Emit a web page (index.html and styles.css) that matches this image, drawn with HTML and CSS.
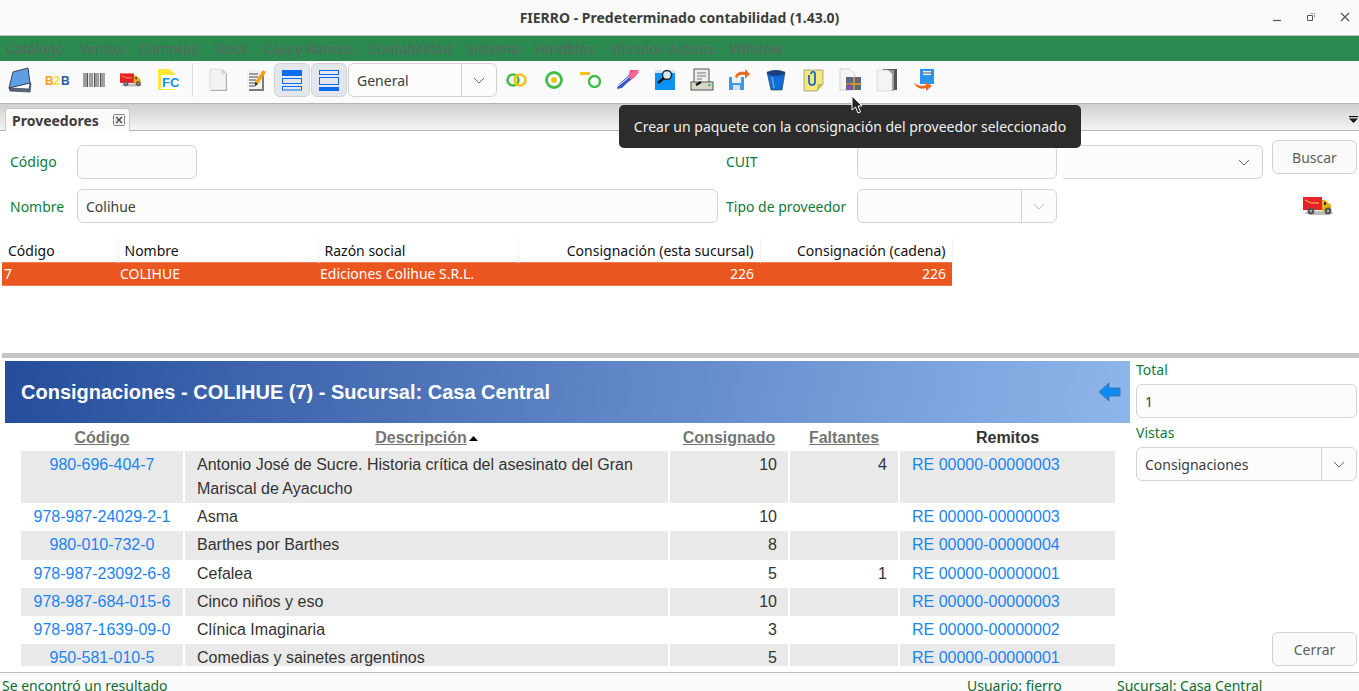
FILE: index.html
```html
<!DOCTYPE html>
<html lang="es">
<head>
<meta charset="utf-8">
<title>FIERRO</title>
<link rel="stylesheet" href="styles.css">
</head>
<body>
<svg class="defs" width="0" height="0">
  <defs>
    <symbol id="truck" viewBox="0 0 30 18">
      <ellipse cx="16" cy="16" rx="14" ry="2" fill="#bbb"/>
      <rect x="0" y="0" width="19" height="13" fill="#e8202a"/>
      <path d="M2 3l6 3h8" stroke="#ffd23c" fill="none"/>
      <path d="M19 3h3l6 5v6H19z" fill="#e0b020"/>
      <rect x="21" y="5" width="2" height="3" fill="#333"/>
      <circle cx="8" cy="14" r="3.4" fill="#555"/><circle cx="8" cy="14" r="1.3" fill="#aaa"/>
      <circle cx="25" cy="14" r="3.4" fill="#555"/><circle cx="25" cy="14" r="1.3" fill="#aaa"/>
    </symbol>
    <symbol id="chev" viewBox="0 0 12 7">
      <path d="M1 1l5 5 5-5" fill="none" stroke="currentColor" stroke-width="1"/>
    </symbol>
  </defs>
</svg>

<header class="titlebar">
  <span class="title">FIERRO - Predeterminado contabilidad (1.43.0)</span>
  <div class="winctl">
    <svg width="10" height="10" viewBox="0 0 10 10"><path d="M1 8.5h8" stroke="#555" stroke-width="1.2"/></svg>
    <svg width="10" height="10" viewBox="0 0 10 10"><path d="M1.5 3.5h5v5h-5z" fill="none" stroke="#555"/><path d="M4 1.5h4.5V6" fill="none" stroke="#999" stroke-width=".8"/></svg>
    <svg width="10" height="10" viewBox="0 0 10 10"><path d="M1 1l8 8M9 1l-8 8" stroke="#555" stroke-width="1.2"/></svg>
  </div>
</header>

<nav class="menubar">
  <span>Catálogo</span><span>Ventas</span><span>Compras</span><span>Stock</span><span>Caja y Bancos</span><span>Contabilidad</span><span>Sistema</span><span>Vendidos</span><span>Vínculos Activos</span><span>Window</span>
</nav>

<div class="toolbar">
  <div class="ti"><svg width="26" height="26" viewBox="0 0 26 26"><path d="M2 21L6 5 21 1l2 15z" fill="#5f9ee0" stroke="#33415a"/><path d="M2 21l1 3 20 1 1-9-1 0-1 6-19-1z" fill="#5a6478" stroke="#33415a" stroke-width=".7"/></svg></div>
  <div class="ti"><svg width="26" height="16" viewBox="0 0 26 16"><text class="b2b" x="1" y="13" fill="#ff9d1e">B</text><text class="b2b" x="9.5" y="13" fill="#f7e034">2</text><text class="b2b" x="17" y="13" fill="#1d5ea8">B</text></svg></div>
  <div class="ti"><svg width="24" height="16" viewBox="0 0 24 16"><rect x="1" y="1" width="22" height="14" fill="#e8e8e8"/><path d="M2 1v14M4 1v14M5.5 1v14M8 1v14M10 1v14M12.5 1v14M14 1v14M16 1v14M18.5 1v14M20 1v14M22 1v14" stroke="#555" stroke-width="1"/></svg></div>
  <div class="ti"><svg width="22" height="14"><use href="#truck"/></svg></div>
  <div class="ti"><svg width="22" height="24" viewBox="0 0 22 24"><path d="M1 1h12l5 5v16H1z" fill="#ffe63c"/><rect x="4" y="7" width="18" height="14" fill="#fff"/><text class="fc" x="5" y="19">FC</text></svg></div>
  <div class="tsep"></div>
  <div class="ti"><svg width="20" height="24" viewBox="0 0 20 24"><path d="M2 1h11l5 5v17H2z" fill="#555" opacity=".55"/><path d="M1 1h11l5 5v16H1z" fill="#f3f3f3" stroke="#ccc" stroke-width=".6"/><path d="M12 1v5h5z" fill="#ddd"/></svg></div>
  <div class="ti"><svg width="20" height="24" viewBox="0 0 20 24"><path d="M3 3h15v20H3z" fill="#444" opacity=".7"/><path d="M1 2h15v19H1z" fill="#f2f2f2"/><path d="M3 6h9M3 9h9M3 12h7M3 15h6M3 18h6" stroke="#444"/><path d="M17 2l3 2-8 12-3 2 0-4z" fill="#f2a21e"/><path d="M9 18l0-4 3 2z" fill="#222"/></svg></div>
  <button class="tog"><svg width="22" height="22" viewBox="0 0 22 22"><rect x="1" y="1" width="20" height="6" fill="#0a6cf0"/><rect x="1.5" y="9.5" width="19" height="5" fill="none" stroke="#0a6cf0"/><rect x="1.5" y="17.5" width="19" height="3.5" fill="none" stroke="#0a6cf0"/></svg></button>
  <button class="tog"><svg width="22" height="22" viewBox="0 0 22 22"><rect x="1.5" y="1.5" width="19" height="4" fill="none" stroke="#0a6cf0"/><rect x="1.5" y="8.5" width="19" height="7" fill="none" stroke="#0a6cf0"/><rect x="1" y="18" width="20" height="4" fill="#0a6cf0"/></svg></button>
  <div class="combo tcombo"><span class="cval">General</span><span class="carrow"><svg width="12" height="7"><use href="#chev"/></svg></span></div>
  <div class="ti"><svg width="24" height="16" viewBox="0 0 24 16"><circle cx="8" cy="8" r="5.5" fill="none" stroke="#3fbe48" stroke-width="2.6"/><circle cx="15" cy="8" r="5.5" fill="none" stroke="#f4c21a" stroke-width="2.6"/></svg></div>
  <div class="ti"><svg width="20" height="20" viewBox="0 0 20 20"><circle cx="10" cy="10" r="7.5" fill="#fff" stroke="#3fbe48" stroke-width="2.8"/><circle cx="10" cy="10" r="3" fill="#f4c21a"/></svg></div>
  <div class="ti"><svg width="24" height="18" viewBox="0 0 24 18"><rect x="1" y="1" width="10" height="3" fill="#f4c21a"/><circle cx="15.500" cy="10.500" r="5.500" fill="#fff" stroke="#3fbe48" stroke-width="2.400"/></svg></div>
  <div class="ti"><svg width="24" height="22" viewBox="0 0 24 22"><path d="M14 1l9 0-4 7-8 6z" fill="#f0508a"/><path d="M12 6l9-5 2 3-10 7z" fill="#f56a9a"/><path d="M2 16l10-9 3 3-9 9-5 1z" fill="#3a55d0"/><path d="M2 17l11-9" stroke="#fff"/></svg></div>
  <div class="ti"><svg width="22" height="22" viewBox="0 0 22 22"><rect x="1" y="1" width="20" height="20" fill="#0a93f5"/><rect x="1" y="1" width="20" height="3" fill="#cfe8fb"/><circle cx="13" cy="6" r="4.500" fill="#cfe8fb" stroke="#222" stroke-width="1.400"/><path d="M10 9l-6 5" stroke="#111" stroke-width="2.400"/></svg></div>
  <div class="ti"><svg width="24" height="24" viewBox="0 0 24 24"><path d="M4 1h15v14H4z" fill="#eee" stroke="#555"/><path d="M7 5h9M7 8h9M7 11h5" stroke="#777"/><rect x="1" y="14" width="22" height="8" fill="#d8d8c8" stroke="#555"/><rect x="18" y="16" width="3" height="2" fill="#45d060"/><path d="M6 17l5-3" stroke="#111" stroke-width="2.400"/></svg></div>
  <div class="ti"><svg width="24" height="22" viewBox="0 0 24 22"><path d="M2 8h15v13H2z" fill="#3f98e0"/><rect x="5" y="8" width="9" height="6" fill="#eee"/><rect x="6" y="16" width="7" height="5" fill="#dde"/><path d="M8 8c1-5 6-6 10-5V0l5 5-5 5V6c-4-1-7 0-8 3z" fill="#e56a28"/></svg></div>
  <div class="ti"><svg width="20" height="22" viewBox="0 0 20 22"><path d="M1 3h18l-3 18H5z" fill="#0f6fd6" stroke="#234" stroke-width=".6"/><ellipse cx="10" cy="4" rx="9" ry="3" fill="#1a3f80"/><path d="M6 8l2 11" stroke="#4ea5f0" stroke-width="1.500"/></svg></div>
  <div class="ti"><svg width="22" height="24" viewBox="0 0 22 24"><path d="M2 2h19v14l-6 7H2z" fill="#f6e878" stroke="#888" stroke-width=".7"/><path d="M15 23l1-7h5z" fill="#c9b84a"/><path d="M9 6c0-3 4-3 4 0v8c0 4-6 4-6 0V7" fill="none" stroke="#1060d0" stroke-width="1.700"/></svg></div>
  <div class="ti"><svg width="24" height="24" viewBox="0 0 24 24"><path d="M2 1h10l5 5v16H2z" fill="#f4f4f4" stroke="#bbb" stroke-width=".6"/><rect x="8" y="9" width="15" height="13" fill="#56688a"/><path d="M8 16h15" stroke="#f29a1c" stroke-width="1.500"/><path d="M16 9v13" stroke="#f29a1c" stroke-width="1.500"/><rect x="9" y="16" width="3" height="6" fill="#a040c0"/></svg></div>
  <div class="ti"><svg width="24" height="24" viewBox="0 0 24 24"><path d="M8 1h14v21H8z" fill="#555"/><path d="M5 2h14v21H5z" fill="#999"/><path d="M2 2h11l4 4v17H2z" fill="#f4f4f4" stroke="#ccc" stroke-width=".6"/></svg></div>
  <div class="ti"><svg width="24" height="24" viewBox="0 0 24 24"><path d="M8 1h14v15H8z" fill="#2a94ee"/><rect x="11" y="3" width="8" height="4" fill="#eee"/><path d="M11 5h8" stroke="#555"/><path d="M2 15c3 2 7 4 12 2v-3l6 4-6 5v-3c-6 2-10-1-12-5z" fill="#e56a28"/></svg></div>
</div>

<div class="tabbar">
  <div class="tab"><span>Proveedores</span><svg width="12" height="12" viewBox="0 0 12 12"><rect x=".5" y=".5" width="11" height="11" rx="1" fill="#eee" stroke="#888"/><path d="M3 3l6 6M9 3l-6 6" stroke="#444" stroke-width="1.300"/></svg></div>
  <svg class="tabmenu" width="9" height="7" viewBox="0 0 9 7"><path d="M0 0h9v1.200H0z" fill="#111"/><path d="M0 2.500h9L4.500 7z" fill="#111"/></svg>
</div>

<main class="content">
  <section class="upper">
    <form class="search">
      <label class="flabel">Código</label>
      <input class="inp inp-short" type="text">
      <label class="flabel">CUIT</label>
      <input class="inp" type="text">
      <div class="combo plain"><svg width="12" height="7"><use href="#chev"/></svg></div>
      <button class="btn btn-top" type="button">Buscar</button>

      <label class="flabel">Nombre</label>
      <input class="inp" type="text" value="Colihue">
      <label class="flabel">Tipo de proveedor</label>
      <div class="combo"><span class="cval"></span><span class="carrow carrow-dim"><svg width="12" height="7"><use href="#chev"/></svg></span></div>
      <div class="spacer"></div>
      <svg class="ftruck" width="30" height="18"><use href="#truck"/></svg>
    </form>

    <table class="results">
      <thead>
        <tr><th class="c1">Código</th><th class="c2">Nombre</th><th class="c3">Razón social</th><th class="c4 num">Consignación (esta sucursal)</th><th class="c5 num">Consignación (cadena)</th></tr>
      </thead>
      <tbody>
        <tr><td>7</td><td>COLIHUE</td><td>Ediciones Colihue S.R.L.</td><td class="num">226</td><td class="num">226</td></tr>
      </tbody>
    </table>
  </section>

  <div class="splitter"></div>

  <section class="lower">
    <div class="report">
      <div class="banner">
        <h1>Consignaciones - COLIHUE (7) - Sucursal: Casa Central</h1>
        <svg width="24" height="20" viewBox="0 0 24 20"><path d="M1 10l10-9v5h11v8H11v5z" fill="#0a8cf0" stroke="#4a6a9a" stroke-width=".8"/></svg>
      </div>
      <div class="gridwrap">
        <table class="grid">
          <thead>
            <tr>
              <th class="g1"><a>Código</a></th>
              <th class="g2"><a>Descripción</a><svg class="sort" width="9" height="5" viewBox="0 0 9 5"><path d="M0 5l4.500-5L9 5z" fill="#000"/></svg></th>
              <th class="g3"><a>Consignado</a></th>
              <th class="g4"><a>Faltantes</a></th>
              <th class="g5">Remitos</th>
            </tr>
          </thead>
          <tbody>
            <tr><td class="code">980-696-404-7</td><td>Antonio José de Sucre. Historia crítica del asesinato del Gran Mariscal de Ayacucho</td><td class="n">10</td><td class="n">4</td><td class="rem">RE 00000-00000003</td></tr>
            <tr><td class="code">978-987-24029-2-1</td><td>Asma</td><td class="n">10</td><td class="n"></td><td class="rem">RE 00000-00000003</td></tr>
            <tr><td class="code">980-010-732-0</td><td>Barthes por Barthes</td><td class="n">8</td><td class="n"></td><td class="rem">RE 00000-00000004</td></tr>
            <tr><td class="code">978-987-23092-6-8</td><td>Cefalea</td><td class="n">5</td><td class="n">1</td><td class="rem">RE 00000-00000001</td></tr>
            <tr><td class="code">978-987-684-015-6</td><td>Cinco niños y eso</td><td class="n">10</td><td class="n"></td><td class="rem">RE 00000-00000003</td></tr>
            <tr><td class="code">978-987-1639-09-0</td><td>Clínica Imaginaria</td><td class="n">3</td><td class="n"></td><td class="rem">RE 00000-00000002</td></tr>
            <tr><td class="code">950-581-010-5</td><td>Comedias y sainetes argentinos</td><td class="n">5</td><td class="n"></td><td class="rem">RE 00000-00000001</td></tr>
          </tbody>
        </table>
      </div>
    </div>
    <aside class="side">
      <label class="flabel">Total</label>
      <input class="inp side-inp" type="text" value="1">
      <label class="flabel side-l2">Vistas</label>
      <div class="combo side-combo"><span class="cval">Consignaciones</span><span class="carrow"><svg width="12" height="7"><use href="#chev"/></svg></span></div>
      <button class="btn btn-close" type="button">Cerrar</button>
    </aside>
  </section>
</main>

<footer class="status">
  <span class="st-main">Se encontró un resultado</span>
  <span class="st-user">Usuario: fierro</span>
  <span class="st-suc">Sucursal: Casa Central</span>
</footer>

<div class="tooltip">Crear un paquete con la consignación del proveedor seleccionado</div>
<svg class="cursor" width="12" height="19" viewBox="0 0 12 19"><path d="M1 1v14l3.500-3 2.500 6 2.500-1-2.500-6H11z" fill="#222" stroke="#fff"/></svg>
</body>
</html>
```

FILE: styles.css
```css
* { box-sizing: border-box; }
html, body { margin: 0; height: 691px; overflow: hidden; }
body {
  position: relative;
  display: flex;
  flex-direction: column;
  background: #fff;
  font-family: "Noto Sans", sans-serif;
  font-size: 14px;
  color: #3d3d3d;
}
.defs { position: absolute; }

.titlebar {
  height: 36px;
  flex: none;
  background: #fafafa;
  border-bottom: 1px solid #c6c6c6;
  display: flex;
  align-items: center;
  justify-content: center;
  position: relative;
}
.title { font-weight: 700; font-size: 14px; color: #3d3d3d; }
.winctl {
  position: absolute;
  right: 9px;
  top: 12px;
  display: flex;
  gap: 24px;
}

.menubar {
  height: 25px;
  flex: none;
  background: #2a8a50;
  display: flex;
  align-items: center;
  gap: 15px;
  padding-left: 6px;
  color: #5a6660;
  font-size: 14px;
}

.toolbar {
  height: 43px;
  flex: none;
  background: #fafafa;
  border-bottom: 1px solid #b4b4b4;
  display: flex;
  align-items: center;
  padding: 0 0 4px 1px;
}
.ti {
  width: 37px;
  height: 34px;
  flex: none;
  display: flex;
  align-items: center;
  justify-content: center;
}
.tsep { width: 1px; height: 34px; background: #ddd; margin: 0 7px 0 6px; flex: none; }
.b2b { font: 700 12px "Liberation Sans", sans-serif; }
.fc { font: 700 13px "Liberation Sans", sans-serif; fill: #0a93f5; }
.tog {
  width: 36px;
  height: 34px;
  flex: none;
  margin-right: 1px;
  padding: 0;
  background: #e3e7eb;
  border: 1px solid #d2d2d2;
  border-radius: 6px;
  display: flex;
  align-items: center;
  justify-content: center;
}
.combo {
  height: 34px;
  background: #fcfcfc;
  border: 1px solid #d3d3d3;
  border-radius: 6px;
  display: flex;
  align-items: stretch;
  color: #666;
}
.tcombo { width: 149px; flex: none; margin-right: 1px; }
.cval { flex: 1; padding-left: 8px; display: flex; align-items: center; color: #3d3d3d; }
.carrow {
  width: 35px;
  border-left: 1px solid #d3d3d3;
  display: flex;
  align-items: center;
  justify-content: center;
}
.carrow-dim { color: #bbb; }

.tabbar {
  height: 27px;
  flex: none;
  background: linear-gradient(#cfcfcf, #f4f4f4);
  border-bottom: 1px solid #b4b4b4;
  display: flex;
  align-items: flex-end;
  justify-content: space-between;
  padding: 0 0 0 5px;
}
.tab {
  width: 125px;
  height: 23px;
  margin-bottom: -1px;
  background: #fafafa;
  border: 1px solid #c8c8c8;
  border-bottom: none;
  border-radius: 3px 3px 0 0;
  display: flex;
  align-items: center;
  justify-content: space-between;
  padding: 0 4px 0 6px;
  font-weight: 700;
  font-size: 14px;
}
.tabmenu { margin: 0 1px 7px 0; }

.content {
  height: 541px;
  flex: none;
  display: flex;
  flex-direction: column;
  overflow: hidden;
}

.upper { height: 222px; flex: none; }
.search {
  display: grid;
  grid-template-columns: 67px 641px 8px 131px 200px 6px 200px 9px 85px;
  grid-template-rows: 39px 34px;
  row-gap: 10px;
  padding: 9px 0 0 10px;
  align-items: end;
}
.flabel { color: #0e7a3c; align-self: center; }
.search .flabel:nth-child(1) { grid-column: 1; align-self: end; line-height: 34px; }
.search .inp:nth-child(2) { grid-column: 2; }
.search .flabel:nth-child(3) { grid-column: 4; align-self: end; line-height: 34px; }
.search .inp:nth-child(4) { grid-column: 5; }
.search .plain { grid-column: 7; }
.search .btn-top { grid-column: 9; align-self: start; }
.search .flabel:nth-child(7) { grid-column: 1; }
.search .inp:nth-child(8) { grid-column: 2; }
.search .flabel:nth-child(9) { grid-column: 4; }
.search .combo:nth-child(10) { grid-column: 5; }
.spacer { grid-column: 7; }
.ftruck { grid-column: 9; justify-self: end; align-self: center; margin: 0 24px 0 0; }

.inp {
  height: 34px;
  width: 100%;
  background: #fcfcfc;
  border: 1px solid #d3d3d3;
  border-radius: 6px;
  padding: 0 8px;
  font: inherit;
  color: #3d3d3d;
}
.inp-short { width: 120px; }
.plain {
  border-left: none;
  border-radius: 0 6px 6px 0;
  justify-content: flex-end;
  align-items: center;
  padding-right: 12px;
}
.btn {
  width: 85px;
  height: 34px;
  background: #fafafa;
  border: 1px solid #d3d3d3;
  border-radius: 6px;
  font: inherit;
  color: #5e5e5e;
  padding: 0;
}

.results {
  margin: 16px 0 0 2px;
  width: 950px;
  table-layout: fixed;
  border-collapse: collapse;
  color: #111;
}
.results th {
  height: 23px;
  padding: 0 6px;
  text-align: left;
  font-weight: 400;
  border-right: 1px solid #f2f2f2;
}
.results .c1 { width: 116px; }
.results .c2 { width: 200px; }
.results .c3 { width: 200px; }
.results .c4 { width: 242px; }
.results .c5 { width: 192px; }
.results th.num, .results td.num { text-align: right; }
.results td {
  height: 23px;
  padding: 0 6px 0 2px;
  background: #ea5520;
  color: #fff;
  border-top: 1px solid #ef7a4f;
  border-bottom: 1px solid #ef7a4f;
  white-space: nowrap;
}

.splitter { height: 5px; flex: none; background: #c4c4c4; margin: 0 0 3px 2px; }

.lower {
  height: 305px;
  flex: none;
  display: flex;
  padding-left: 5px;
  overflow: hidden;
}
.report { width: 1125px; flex: none; display: flex; flex-direction: column; min-height: 0; }
.banner {
  height: 62px;
  flex: none;
  background: linear-gradient(100deg, #264d9b, #8fb6ea);
  display: flex;
  align-items: center;
  justify-content: space-between;
  padding: 0 8px 0 16px;
}
.banner h1 {
  margin: 0;
  font: 700 20px "Liberation Sans", sans-serif;
  color: #fff;
}
.gridwrap {
  flex: 1;
  min-height: 0;
  overflow: hidden;
  padding: 1px 0 0 14px;
}
.grid {
  width: 1097px;
  table-layout: fixed;
  border-collapse: separate;
  border-spacing: 2px 0;
  font: 16px/24px "Liberation Sans", sans-serif;
  color: #333;
}
.grid th { height: 27px; padding: 0; font-weight: 700; text-align: center; color: #333; }
.grid th a { color: #757575; text-decoration: underline; }
.sort { margin-left: 2px; vertical-align: 2px; }
.g1 { width: 162px; }
.g2 { width: 483px; }
.g3 { width: 118px; }
.g4 { width: 108px; }
.g5 { width: 215px; }
.grid td { padding: 2px 12px 2.2px; vertical-align: top; }
.grid tbody tr:nth-child(odd) td { background: #e9e9e9; }
.grid td.code { text-align: center; color: #1a84f5; padding: 2px 0 2.2px; }
.grid td.n { text-align: right; padding-right: 11px; }
.grid td.rem { color: #1a84f5; }

.side {
  width: 221px;
  margin-left: 6px;
  flex: none;
  display: flex;
  flex-direction: column;
}
.side .flabel { align-self: flex-start; line-height: 18px; }
.side-inp { margin-top: 5px; }
.side .side-l2 { margin-top: 6px; }
.side-combo { margin-top: 5px; }
.side-combo .cval { padding-left: 8px; }
.btn-close { margin-top: auto; align-self: flex-end; }

.status {
  height: 20px;
  flex: none;
  background: #fafafa;
  border-top: 1px solid #bdbdbd;
  display: flex;
  padding: 3px 0 0 2px;
  color: #0e6b32;
  line-height: 20px;
  overflow: hidden;
}
.st-main { flex: 1; }
.st-user { width: 150px; }
.st-suc { width: 242px; }

.tooltip {
  position: absolute;
  left: 619px;
  top: 105px;
  width: 462px;
  height: 43px;
  background: #2c2c2c;
  border-radius: 5px;
  color: #f0f0f0;
  display: flex;
  align-items: center;
  justify-content: center;
}
.cursor { position: absolute; left: 851px; top: 95px; }
```
